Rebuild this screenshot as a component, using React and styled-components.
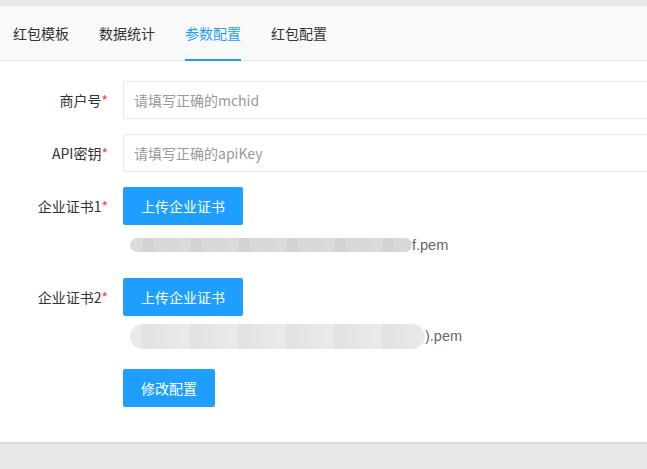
import React from 'react'
import styled, {createGlobalStyle} from 'styled-components'

const GlobalStyle = createGlobalStyle`
  html, body {
    margin: 0;
    padding: 0;
    background: #e8e8e8;
    font-family: "Noto Sans CJK SC", "Noto Sans", "Liberation Sans", sans-serif;
    font-size: 14px;
    color: #333;
  }
  #root {
    height: 469px;
    overflow: hidden;
  }
`

const tabs = ['红包模板', '数据统计', '参数配置', '红包配置']

export default function App() {
  return (
    <>
      <GlobalStyle/>
      <Page>
        <Card>
          <TabBar>
            {tabs.map((t, i) => (
              <Tab key={t} active={i === 2}>{t}</Tab>
            ))}
          </TabBar>

          <Form>
            <FormItem>
              <Label>商户号<Req>*</Req></Label>
              <Input placeholder="请填写正确的mchid"/>
            </FormItem>

            <FormItem>
              <Label>API密钥<Req>*</Req></Label>
              <Input placeholder="请填写正确的apiKey"/>
            </FormItem>

            <FormItem gap={23}>
              <Label>企业证书1<Req>*</Req></Label>
              <Block>
                <Button>上传企业证书</Button>
                <FileLine>
                  <Blur w={282} h={14}/>
                  <span>f.pem</span>
                </FileLine>
              </Block>
            </FormItem>

            <FormItem gap={23}>
              <Label>企业证书2<Req>*</Req></Label>
              <Block>
                <Button>上传企业证书</Button>
                <FileLine>
                  <Blur w={295} h={25} light/>
                  <span>).pem</span>
                </FileLine>
              </Block>
            </FormItem>

            <FormItem>
              <Label/>
              <Button>修改配置</Button>
            </FormItem>
          </Form>
        </Card>
      </Page>
    </>
  )
}

const Page = styled.div`
  padding-top: 6px;
`

const Card = styled.div`
  background: #fff;
  height: 436px;
  box-shadow: 0 1px 2px 0 rgba(0,0,0,0.12);
  overflow: hidden;
`

const TabBar = styled.ul`
  display: flex;
  gap: 30px;
  margin: 0;
  padding: 0 0 0 13px;
  height: 54px;
  background: #f9f9f9;
  border-bottom: 1px solid #e6e6e6;
  list-style: none;
`

const Tab = styled.li`
  position: relative;
  display: flex;
  align-items: center;
  padding-bottom: 1px;
  font-size: 14px;
  color: ${p => p.active ? '#1e9fff' : '#333'};

  &::after {
    content: '';
    display: ${p => p.active ? 'block' : 'none'};
    position: absolute;
    left: 0;
    right: 0;
    bottom: -1px;
    height: 2px;
    background: #1e9fff;
  }
`

const Form = styled.form`
  padding: 20px 0 0 13px;
`

const FormItem = styled.div`
  display: flex;
  align-items: flex-start;
  margin-bottom: ${p => p.gap || 15}px;
`

const Label = styled.label`
  flex: 0 0 110px;
  box-sizing: border-box;
  padding: 0 15px 0 0;
  height: 38px;
  line-height: 38px;
  text-align: right;
  color: #333;
  white-space: nowrap;
`

const Req = styled.span`
  color: #ff3b3b;
`

const Input = styled.input`
  flex: 0 0 560px;
  box-sizing: border-box;
  height: 38px;
  padding: 0 10px;
  border: 1px solid #e6e6e6;
  border-radius: 2px;
  font-family: inherit;
  font-size: 14px;
  color: #333;
  outline: none;

  &::placeholder {
    color: #999;
  }
`

const Block = styled.div`
  display: flex;
  flex-direction: column;
  align-items: flex-start;
`

const Button = styled.button`
  height: 38px;
  padding: 0 18px;
  border: none;
  border-radius: 2px;
  background: #1e9fff;
  color: #fff;
  font-family: inherit;
  font-size: 14px;
  white-space: nowrap;
`

const FileLine = styled.div`
  display: flex;
  align-items: center;
  height: 20px;
  margin-top: 10px;
  padding-left: 7px;
  color: #666;
  font-family: "Liberation Sans", "Noto Sans CJK SC", sans-serif;
  font-size: 14.5px;
`

// pixelated mosaic standing in for the blurred-out file name
const Blur = styled.div`
  flex: 0 0 ${p => p.w}px;
  height: ${p => p.h}px;
  border-radius: ${p => p.h / 2}px;
  background:
    repeating-linear-gradient(90deg,
      rgba(255,255,255,0.12) 0 12px,
      rgba(0,0,0,0.015) 12px 24px,
      rgba(230,225,225,0.15) 24px 36px,
      rgba(255,255,255,0.06) 36px 48px),
    ${p => p.light ? '#e6e6e7' : '#d6d6d8'};
  filter: blur(0.5px);
`
